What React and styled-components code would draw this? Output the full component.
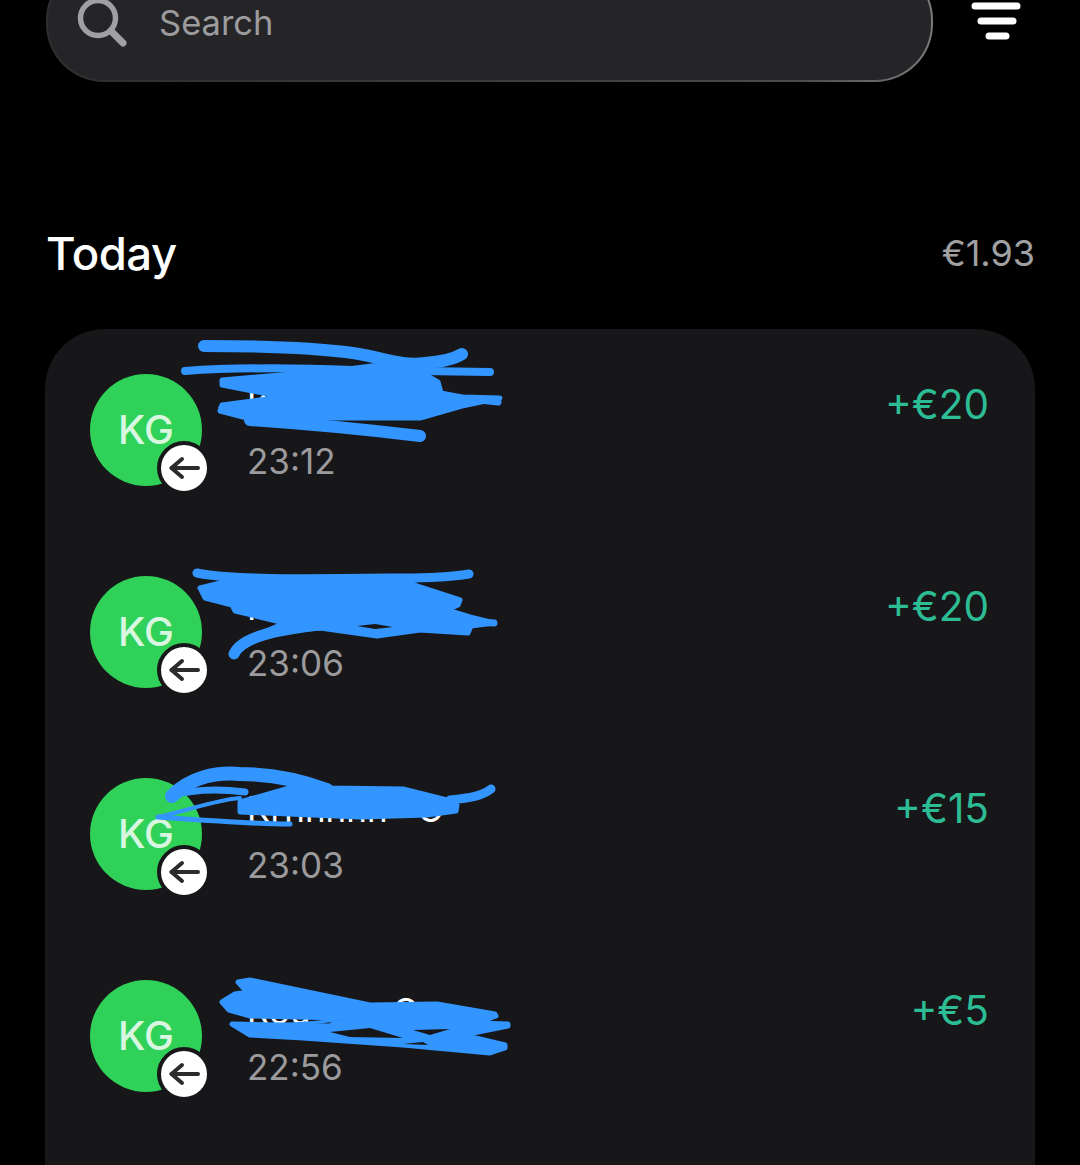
import styled, { createGlobalStyle } from 'styled-components';

const GlobalStyle = createGlobalStyle`
  html, body {
    margin: 0;
    background: #000;
  }
  body {
    font-family: Inter, "Liberation Sans", sans-serif;
  }
`;

const Page = styled.div`
  position: relative;
  display: flex;
  flex-direction: column;
  width: 1080px;
  height: 1165px;
  overflow: hidden;
  background: #000;
`;

const TopBar = styled.header`
  display: flex;
  flex: none;
  align-items: center;
  gap: 38px;
  margin-top: -38px;
  padding-left: 46px;
`;

const SearchBox = styled.div`
  display: flex;
  align-items: center;
  gap: 28px;
  box-sizing: border-box;
  width: 887px;
  height: 120px;
  padding-left: 27px;
  border: 2px solid transparent;
  border-radius: 58px;
  background:
    linear-gradient(#252527, #252527) padding-box,
    linear-gradient(90deg, #2e2e30 0%, #3c3c3e 50%, #4c4c4e 85%, #7a7a7c 100%) border-box;
`;

const SearchLabel = styled.span`
  font-size: 34.5px;
  color: #9c9c9e;
`;

const SectionHeader = styled.div`
  display: flex;
  flex: none;
  justify-content: space-between;
  align-items: center;
  height: 60px;
  margin: 141px 45px 46px 46px;
`;

const SectionTitle = styled.h2`
  margin: 0;
  font-size: 45.5px;
  font-weight: 500;
  letter-spacing: -0.5px;
  color: #fff;
`;

const SectionTotal = styled.span`
  font-size: 36px;
  color: #a0a0a2;
`;

const Card = styled.section`
  flex: 1;
  min-height: 0;
  margin: 0 45px;
  padding: 45px 46px 0 45px;
  border-radius: 60px 60px 0 0;
  background: #17171a;
`;

const Row = styled.div`
  display: flex;
  height: 202px;
`;

const Avatar = styled.div`
  position: relative;
  display: flex;
  align-items: center;
  justify-content: center;
  flex: none;
  box-sizing: border-box;
  width: 112px;
  height: 112px;
  padding-bottom: 2px;
  border-radius: 50%;
  background: #30d158;
  color: #d8f6e0;
  font-size: 40px;
  font-weight: 500;
`;

const Badge = styled.span`
  position: absolute;
  left: 67px;
  top: 67px;
  display: flex;
  align-items: center;
  justify-content: center;
  box-sizing: border-box;
  width: 54px;
  height: 54px;
  border: 4px solid #17171a;
  border-radius: 50%;
  background: #fff;
`;

const Info = styled.div`
  flex: 1;
  margin-left: 45px;
`;

const Name = styled.div`
  height: 62px;
  font-size: 35px;
  line-height: 62px;
  white-space: pre;
  color: #fff;
`;

const Time = styled.div`
  font-size: 35px;
  line-height: 50px;
  color: #9b9b9d;
`;

const Amount = styled.div`
  font-size: 40.5px;
  line-height: 62px;
  color: #2dbd94;
`;

const ScribbleLayer = styled.svg`
  position: absolute;
  left: 0;
  top: 0;
  width: 1080px;
  height: 1165px;
  pointer-events: none;
`;

const SearchIcon = () => (
  <svg width="56" height="70" viewBox="0 0 56 70" fill="none" stroke="#a0a0a2">
    <circle cx="23" cy="31" r="17.5" strokeWidth="5.5" />
    <path d="M36 44 L48 56" strokeWidth="7" strokeLinecap="round" />
  </svg>
);

const FilterIcon = () => (
  <svg width="50" height="44" viewBox="0 0 50 44" stroke="#fff" strokeWidth="7" strokeLinecap="round">
    <path d="M4 6 H46" />
    <path d="M10 21 H42" />
    <path d="M18 36 H35" />
  </svg>
);

const ArrowIcon = () => (
  <svg width="46" height="46" viewBox="0 0 46 46" fill="none" stroke="#2c2c2e" strokeWidth="4" strokeLinecap="round" strokeLinejoin="round">
    <path d="M37 23 H10.5" />
    <path d="M21 14 L10.5 23 L21 32" />
  </svg>
);

const BLUE = '#3395ff';
const CARD = '#17171a';

// the hand-drawn blue marks that cover the names
const Scribbles = () => (
  <ScribbleLayer viewBox="0 0 1080 1165">
    <g fill="none" stroke={BLUE} strokeLinecap="round" strokeLinejoin="round">
      <path strokeWidth="12" d="M204 346 C240 346 300 346 353 353 C385 358 400 366 425 363 C440 362 452 360 462 354" />
      <path strokeWidth="8" d="M185 371 C240 367 300 368 353 370 L490 372" />
      <path strokeWidth="12" d="M250 420 C310 424 370 430 420 436" />
      <path strokeWidth="7" d="M222 408 C300 392 420 392 498 402" />
      <path strokeWidth="9" d="M197 573 C230 580 300 579 403 578 C430 578 450 577 469 574" />
      <path strokeWidth="11" d="M234 654 C240 640 265 630 330 624" />
      <path strokeWidth="7" d="M440 620 L494 623" />
      <path strokeWidth="14" d="M172 796 C190 778 215 772 240 774 C270 774 300 780 327 790" />
      <path strokeWidth="7" d="M170 796 C190 790 215 788 245 792" />
      <path strokeWidth="4" d="M158 817 C190 810 215 800 240 798" />
      <path strokeWidth="5" d="M158 817 C200 820 250 824 290 824" />
      <path strokeWidth="9" d="M450 800 C470 798 482 796 491 789" />
      <path strokeWidth="3" d="M245 1011 C270 1006 300 1010 330 1012" />
      <path strokeWidth="3" d="M252 1026 C280 1024 310 1024 336 1020" />
    </g>
    <g fill={BLUE} stroke={BLUE} strokeWidth="5" strokeLinejoin="round">
      <path d="M222 380 L340 370 L403 362 L438 382 L441 393 L462 397 L500 398 L462 406 L420 418 L353 418 L247 418 L220 411 L222 405 L283 397 L222 385 Z" />
      <path d="M200 588 L220 583 L235 579 L400 579 L420 587 L460 600 L458 605 L447 610 L470 617 L494 623 L471 626 L468 633 L420 630 L377 636 L320 628 L277 631 L250 638 L285 623 L235 611 L232 605 L205 598 Z" />
      <path d="M240 802 L300 785 L327 788 L403 789 L447 800 L457 805 L456 811 L427 815 L360 817 L240 812 Z" />
      <path d="M238 982 L250 980 L370 1005 L437 1004 L495 1014 L496 1016 L478 1023 L508 1024 L508 1026 L463 1035 L505 1045 L505 1048 L490 1053 L403 1045 L303 1038 L250 1035 L232 1024 L330 1026 L345 1018 L250 1016 L229 1010 L222 1002 L235 994 L247 992 Z" />
    </g>
    <g fill={CARD}>
      <path d="M357 626 L375 624 L393 627 L375 629 Z" />
      <path d="M330 1032 L370 1028 L403 1038 L350 1037 Z" />
      <path d="M413 1030 L450 1029 L430 1035 Z" />
      <path d="M403 1044 L423 1042 L428 1045 Z" />
    </g>
  </ScribbleLayer>
);

const transactions = [
  { id: 1, name: 'K', time: '23:12', amount: '+€20' },
  { id: 2, name: 'Kr', time: '23:06', amount: '+€20' },
  { id: 3, name: 'Krnnnnn   O', time: '23:03', amount: '+€15' },
  { id: 4, name: 'Rou        \u200AO', time: '22:56', amount: '+€5' },
];

function App() {
  return (
    <>
      <GlobalStyle />
      <Page>
        <TopBar>
          <SearchBox>
            <SearchIcon />
            <SearchLabel>Search</SearchLabel>
          </SearchBox>
          <FilterIcon />
        </TopBar>
        <SectionHeader>
          <SectionTitle>Today</SectionTitle>
          <SectionTotal>€1.93</SectionTotal>
        </SectionHeader>
        <Card>
          {transactions.map((item) => (
            <Row key={item.id}>
              <Avatar>
                KG
                <Badge>
                  <ArrowIcon />
                </Badge>
              </Avatar>
              <Info>
                <Name>{item.name}</Name>
                <Time>{item.time}</Time>
              </Info>
              <Amount>{item.amount}</Amount>
            </Row>
          ))}
        </Card>
        <Scribbles />
      </Page>
    </>
  );
}

export default App;
